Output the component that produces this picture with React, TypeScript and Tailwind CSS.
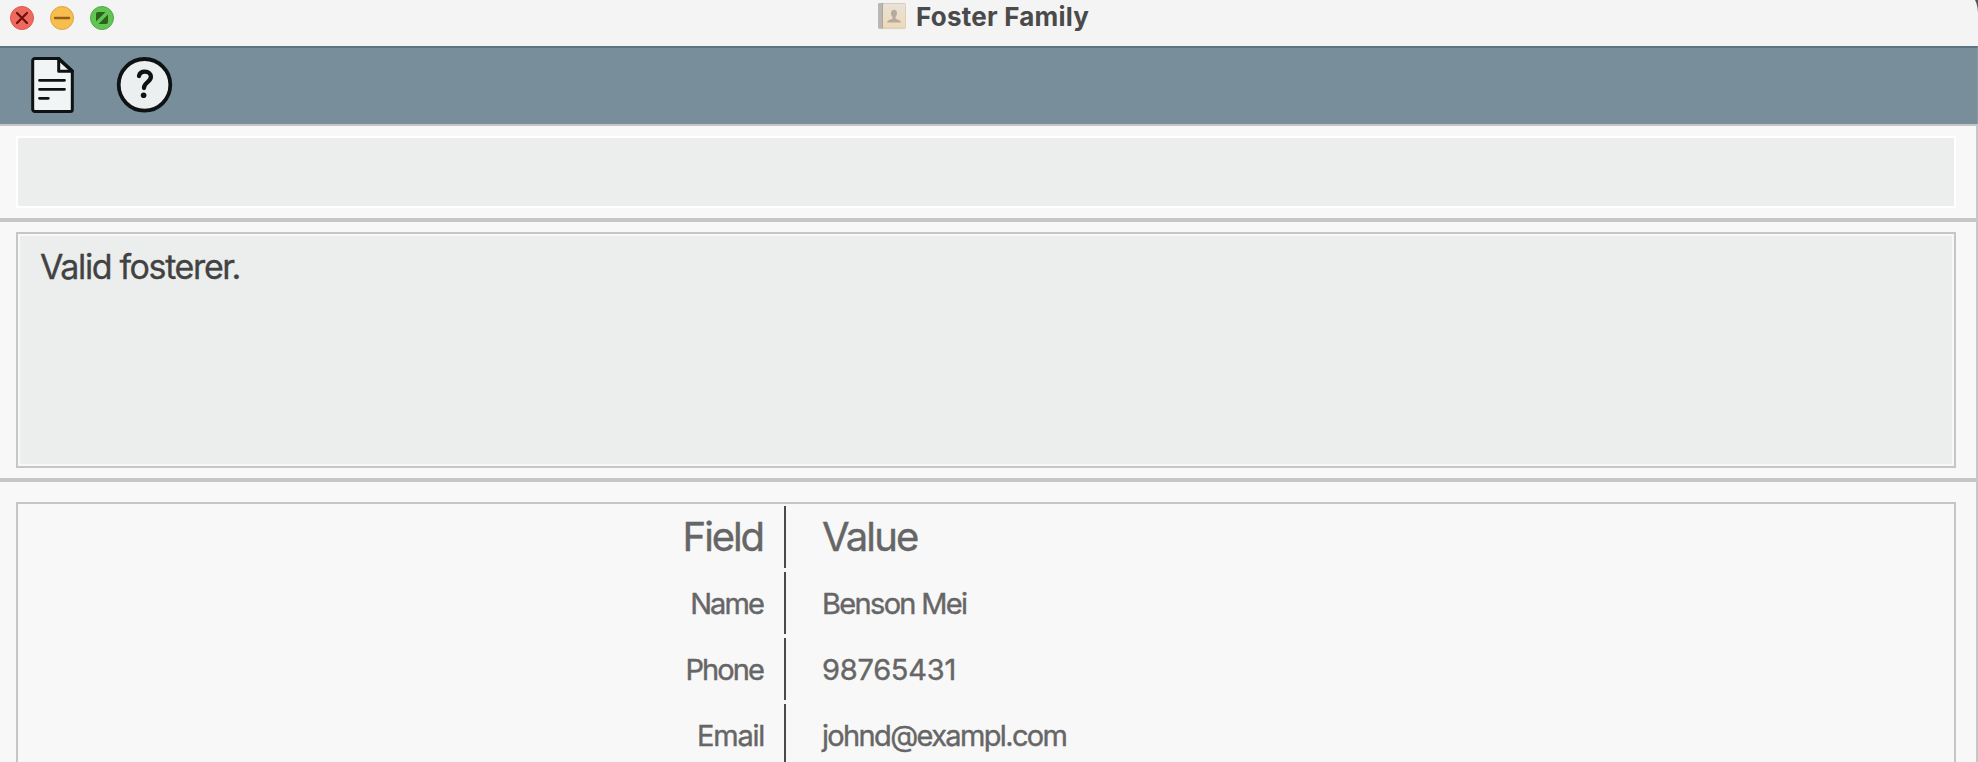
function WindowControls() {
  return (
    <svg className="h-[30px] w-[126px]" viewBox="0 0 126 30" fill="none">
      <circle cx="22" cy="18" r="11.5" fill="#ee6a5f" stroke="#dc5a50" />
      <path d="M17 13 27 23M27 13 17 23" stroke="#6a110c" strokeWidth="2.2" strokeLinecap="round" />
      <circle cx="62" cy="18" r="11.5" fill="#f5be4f" stroke="#dea63f" />
      <path d="M55 18h14" stroke="#965b16" strokeWidth="2.4" strokeLinecap="round" />
      <circle cx="102" cy="18" r="11.5" fill="#61c455" stroke="#51ad44" />
      <path d="M96 21.5V14a2 2 0 0 1 2-2h7.5z" fill="#2a6219" />
      <path d="M108 14.5V22a2 2 0 0 1-2 2h-7.500z" fill="#2a6219" />
    </svg>
  );
}

function ContactsIcon() {
  return (
    <svg className="h-[30px] w-[30px]" viewBox="0 0 30 30">
      <defs>
        <linearGradient id="cover" x1="0" y1="0" x2="0" y2="1">
          <stop offset="0" stopColor="#e9e2d8" />
          <stop offset="1" stopColor="#efdab6" />
        </linearGradient>
      </defs>
      <rect x="1.500" y="28" width="27" height="1.200" fill="#dedede" />
      <rect x="1" y="3" width="28" height="25.500" rx="1.500" fill="#d8cbb8" />
      <rect x="6" y="4" width="22.200" height="23.500" rx="0.500" fill="url(#cover)" />
      <path d="M2.500 3H5v25.500H2.500A1.500 1.500 0 0 1 1 27V4.500A1.500 1.500 0 0 1 2.500 3z" fill="#bcb6b3" />
      <rect x="5" y="3" width="1" height="25.500" fill="#aaa5a2" />
      <path d="M17 9.700c-2 0-3 1.500-3 3.500 0 1.600.7 3 1.500 3.800v1.600c0 .8-5.300 1.200-5.300 4h13.800c0-2.800-5.500-3.200-5.500-4V17c.8-.8 1.500-2.200 1.500-3.800 0-2-1-3.500-3-3.500z" fill="#b5aaa0" />
    </svg>
  );
}

function DocumentIcon() {
  return (
    <svg className="h-[60px] w-[44px]" viewBox="0 0 44 60" fill="none" stroke="#0e1212" strokeWidth="3" strokeLinecap="round" strokeLinejoin="round">
      <path d="M5 3.500h23.500L42.300 16v38.500a2 2 0 0 1-2 2H5a2.300 2.300 0 0 1-2.300-2.300V5.800A2.300 2.300 0 0 1 5 3.500z" fill="#f1f5f6" />
      <path d="M28.700 4v12.300h13" />
      <path d="M29 4l13 12" strokeWidth="3.600" />
      <path d="M9.500 25.300h25M9.500 34.300h25M9.500 43.300h8.800" strokeWidth="2.800" />
    </svg>
  );
}

function HelpIcon() {
  return (
    <svg className="h-[60px] w-[60px]" viewBox="0 0 60 60" fill="none" stroke="#0e1212">
      <circle cx="29.500" cy="29.800" r="25.800" fill="#ebefef" strokeWidth="3.800" />
      <path d="M24 21c.7-3.200 2.700-4.300 5.800-4.300 3.700 0 6.100 2.100 6.100 5.100 0 2.500-1.400 3.900-3.600 5.600-2.300 1.800-3.300 2.900-3.300 5.600" strokeWidth="4.300" strokeLinecap="round" />
      <circle cx="28.600" cy="40.200" r="2.800" fill="#0e1212" stroke="none" />
    </svg>
  );
}

const rows = [
  { field: "Name", value: "Benson Mei", fieldClass: "tracking-[-1.900px] pr-[21px]", valueClass: "tracking-[-1.670px]" },
  { field: "Phone", value: "98765431", fieldClass: "tracking-[-1.900px] pr-[21px]", valueClass: "tracking-[-0.250px]" },
  { field: "Email", value: "johnd@exampl.com", fieldClass: "tracking-[-1.250px] pr-[20px]", valueClass: "tracking-[-1.650px]" },
];

export default function App() {
  return (
    <div className="flex h-[762px] w-[1978px] flex-col overflow-hidden bg-[#f8f8f8] font-['Inter',sans-serif]">
      <header className="relative flex h-[46px] shrink-0 bg-[#f4f4f4]">
        <WindowControls />
        <div className="ml-[751px] flex">
          <ContactsIcon />
          <h1 className="ml-[9px] pt-[1px] text-[26px] leading-[32px] font-bold tracking-[0.230px] whitespace-nowrap text-[#4a4a4a]">Foster Family</h1>
        </div>
        <svg className="absolute top-0 right-0 h-[14px] w-[4px]" viewBox="0 0 4 14">
          <path d="M1 0h3v13C3.700 8 3 3.500 1 0z" fill="#555" />
        </svg>
      </header>
      <nav className="flex h-[78px] shrink-0 gap-[41px] border-t-2 border-r border-t-[#5b7480] border-r-[#869ba5] bg-[#788f9b] pt-[7px] pl-[30px]">
        <DocumentIcon />
        <HelpIcon />
      </nav>
      <main className="flex min-h-0 flex-1 flex-col border-t-2 border-r-2 border-[#c6c6c6]">
        <div className="h-[92px] shrink-0 pt-[10px] pr-[20px] pl-[16px]">
          <input aria-label="Command" className="block h-[72px] w-full border-2 border-white bg-[#ebeeec] px-5 text-[34px] text-[#424242] outline-none" />
        </div>
        <div className="h-[260px] shrink-0 border-t-4 border-[#c6c6c6] pt-[10px] pr-[20px] pl-[16px]">
          <div className="h-[236px] border-2 border-[#c6c6c6] p-[2px]">
            <div className="h-full bg-[#ebeeec] pt-[11px] pl-[20px] text-[34px] leading-[40px] tracking-[-1.380px] text-[#424242] [-webkit-text-stroke:0.3px_#424242]">Valid fosterer.</div>
          </div>
        </div>
        <div className="min-h-0 flex-1 overflow-hidden border-t-4 border-[#c6c6c6] pt-[20px] pr-[20px] pl-[16px]">
          <div className="h-[400px] border-2 border-[#c6c6c6] text-[#666666] [-webkit-text-stroke:0.4px_#666666]">
            <div className="flex h-[66px] items-center text-[40px]">
              <div className="w-[766px] pr-[21px] text-right tracking-[-2.080px]">Field</div>
              <div className="h-[62px] w-[2px] bg-[#4a4a4a]" />
              <div className="pl-[36px] tracking-[-1.850px]">Value</div>
            </div>
            {rows.map((row) => (
              <div key={row.field} className="flex h-[66px] items-center text-[29px]">
                <div className={`w-[766px] pt-[2px] text-right ${row.fieldClass}`}>{row.field}</div>
                <div className="h-[62px] w-[2px] bg-[#4a4a4a]" />
                <div className={`pt-[2px] pl-[36px] ${row.valueClass}`}>{row.value}</div>
              </div>
            ))}
          </div>
        </div>
      </main>
    </div>
  );
}
